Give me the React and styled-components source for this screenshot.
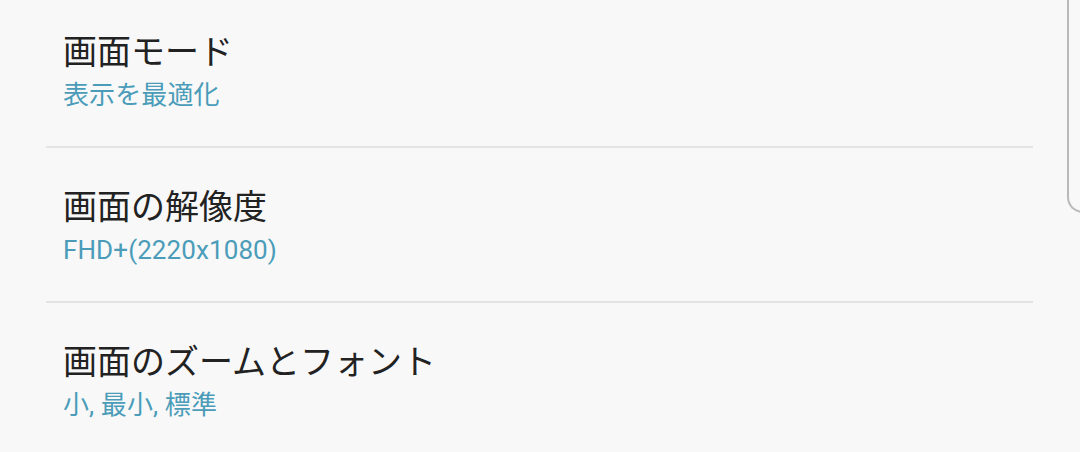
import React from 'react';
import styled, { createGlobalStyle } from 'styled-components';

const GlobalStyle = createGlobalStyle`
  html, body {
    margin: 0;
    padding: 0;
    background-color: #f8f8f8;
  }
  body {
    font-family: Roboto, "Noto Sans CJK JP", sans-serif;
  }
`;

const Screen = styled.div`
  position: relative;
  width: 1080px;
  height: 452px;
  overflow: hidden;
  background-color: #f8f8f8;
`;

const List = styled.ul`
  list-style: none;
  margin: -7px 0 0 0;
  padding: 0 47px 0 46px;
`;

const Item = styled.li`
  display: flex;
  flex-direction: column;
  gap: 3px;
  padding: 37px 0 33px 17px;
  border-bottom: 2px solid #e4e4e4;

  &:last-child {
    border-bottom: none;
  }
`;

const Title = styled.span`
  font-size: 34px;
  line-height: 44px;
  color: #222222;
`;

const Summary = styled.span`
  font-size: 26px;
  line-height: 36px;
  letter-spacing: 0.1px;
  color: #4b9cb9;
`;

const EdgePanel = styled.div`
  position: absolute;
  top: -20px;
  left: 1067px;
  right: -10px;
  height: 231px;
  border-left: 2px solid #b9b9b9;
  border-bottom: 2px solid #b9b9b9;
  border-bottom-left-radius: 16px;
`;

const items = [
  { title: '画面モード', summary: '表示を最適化' },
  { title: '画面の解像度', summary: 'FHD+(2220x1080)' },
  { title: '画面のズームとフォント', summary: '小, 最小, 標準' }
];

const App = () => {
  return (
    <>
      <GlobalStyle />
      <Screen>
        <List>
          {items.map(item => (
            <Item key={item.title}>
              <Title>{item.title}</Title>
              <Summary>{item.summary}</Summary>
            </Item>
          ))}
        </List>
        <EdgePanel />
      </Screen>
    </>
  );
};

export default App;
